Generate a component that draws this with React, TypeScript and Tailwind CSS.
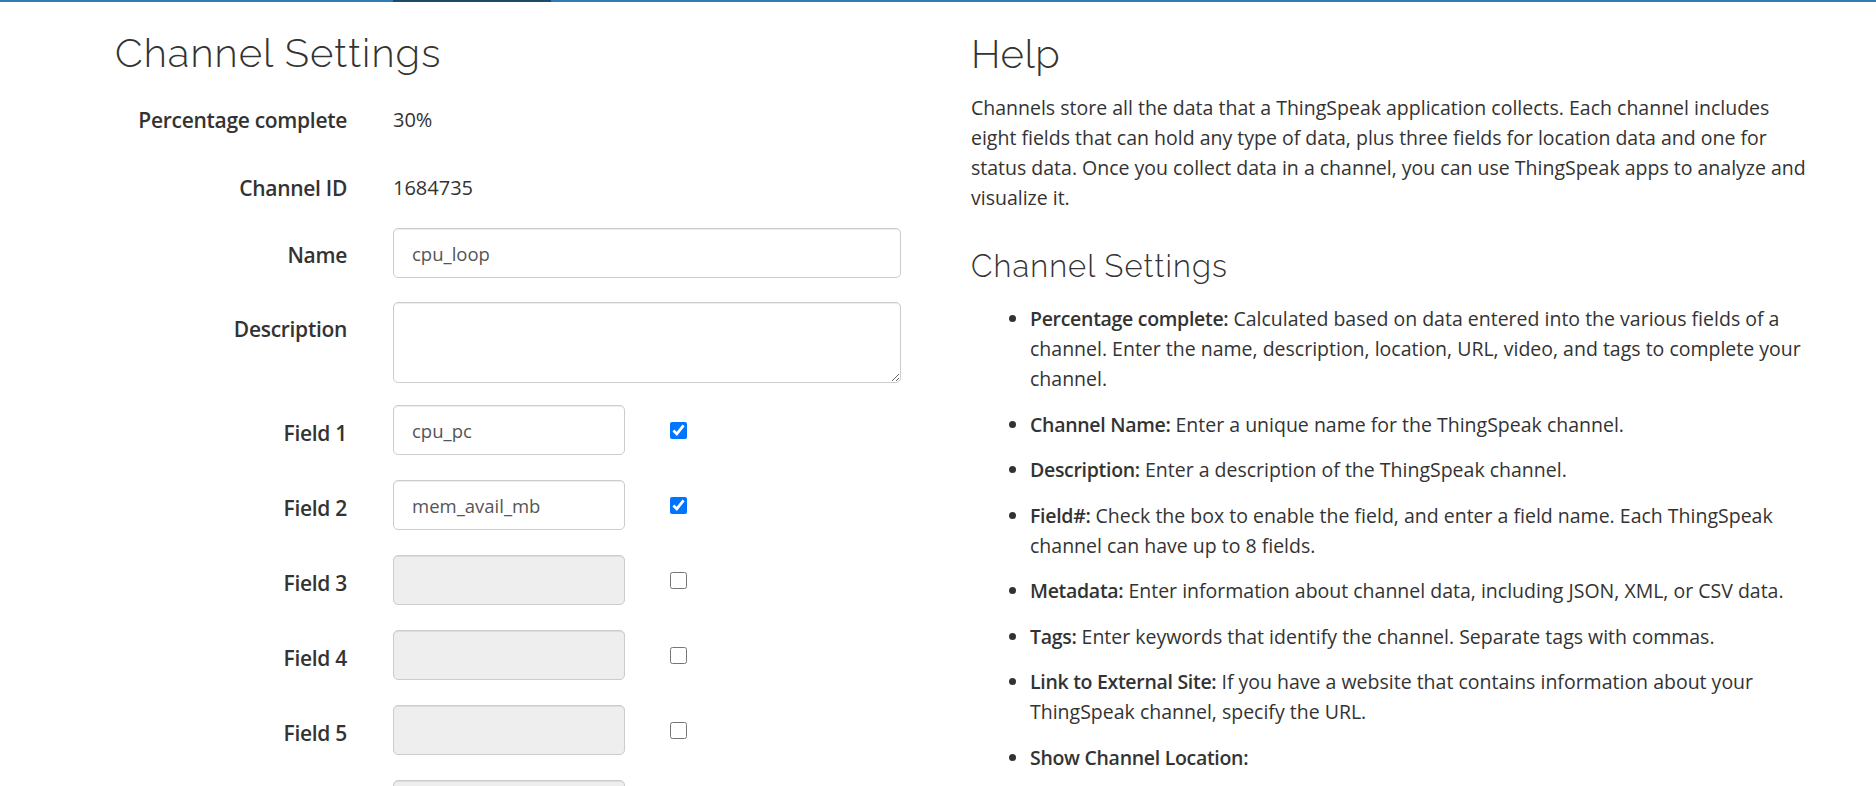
import React from "react";

const fields = [
  { label: "Field 1", value: "cpu_pc", enabled: true },
  { label: "Field 2", value: "mem_avail_mb", enabled: true },
  { label: "Field 3", value: "", enabled: false },
  { label: "Field 4", value: "", enabled: false },
  { label: "Field 5", value: "", enabled: false },
  { label: "Field 6", value: "", enabled: false },
  { label: "Field 7", value: "", enabled: false },
  { label: "Field 8", value: "", enabled: false },
];

const help = [
  {
    b: "Percentage complete:",
    t: " Calculated based on data entered into the various fields of a channel. Enter the name, description, location, URL, video, and tags to complete your channel.",
  },
  { b: "Channel Name:", t: " Enter a unique name for the ThingSpeak channel." },
  { b: "Description:", t: " Enter a description of the ThingSpeak channel." },
  {
    b: "Field#:",
    t: " Check the box to enable the field, and enter a field name. Each ThingSpeak channel can have up to 8 fields.",
  },
  { b: "Metadata:", t: " Enter information about channel data, including JSON, XML, or CSV data." },
  { b: "Tags:", t: " Enter keywords that identify the channel. Separate tags with commas." },
  {
    b: "Link to External Site:",
    t: " If you have a website that contains information about your ThingSpeak channel, specify the URL.",
  },
  { b: "Show Channel Location:", t: "" },
];

const inputCls =
  "h-[50px] rounded-[5px] border border-[#cccccc] px-[18px] text-[18.5px] text-[#555555] shadow-[inset_0_1px_1px_rgba(0,0,0,0.075)] outline-none font-['Open_Sans',sans-serif]";

const labelCls =
  "w-[232px] shrink-0 text-right text-[21px] leading-[30px] font-semibold tracking-[-0.3px]";

export default function App() {
  return (
    <div className="bg-white text-[#333333] font-['Open_Sans',sans-serif]">
      <div className="flex h-[2px]">
        <div className="w-[393px] bg-[#2f7bb5]" />
        <div className="w-[158px] bg-[#1c4b68]" />
        <div className="flex-1 bg-[#2f7bb5]" />
      </div>

      <div className="flex pl-[115px]">
        {/* Left column: form */}
        <div className="w-[856px] shrink-0">
          <h1 className="mt-[27px] h-[48px] text-[40px] leading-[48px] font-light tracking-[1.1px] text-[#333333] font-['Raleway','Lato',sans-serif]">
            Channel Settings
          </h1>

          <div className="mt-[28px] flex h-[30px] items-start">
            <div className={labelCls}>Percentage complete</div>
            <div className="ml-[46px] text-[20px] leading-[30px]">30%</div>
          </div>

          <div className="mt-[38px] flex h-[30px] items-start">
            <div className={labelCls}>Channel ID</div>
            <div className="ml-[46px] text-[20px] leading-[30px]">1684735</div>
          </div>

          <div className="mt-[25px] flex items-start">
            <div className={labelCls + " pt-[12px]"}>Name</div>
            <input
              className={inputCls + " ml-[46px] w-[508px] bg-white"}
              defaultValue="cpu_loop"
            />
          </div>

          <div className="mt-[24px] flex items-start">
            <div className={labelCls + " pt-[12px]"}>Description</div>
            <textarea
              className="ml-[46px] block h-[81px] w-[508px] rounded-[5px] border border-[#cccccc] bg-white px-[18px] py-[10px] text-[18.5px] text-[#555555] shadow-[inset_0_1px_1px_rgba(0,0,0,0.075)] outline-none font-['Open_Sans',sans-serif]"
              defaultValue=""
            />
          </div>

          <div className="mt-[22px] flex flex-col gap-[25px] pb-[40px]">
            {fields.map((f) => (
              <div key={f.label} className="flex items-start">
                <div className={labelCls + " pt-[13px]"}>{f.label}</div>
                <input
                  className={
                    inputCls +
                    " ml-[46px] w-[232px] " +
                    (f.enabled ? "bg-white" : "bg-[#eeeeee]")
                  }
                  defaultValue={f.value}
                  disabled={!f.enabled}
                />
                <div className="ml-[45px] flex h-[50px] items-center">
                  <input
                    type="checkbox"
                    defaultChecked={f.enabled}
                    className="m-0 h-[17px] w-[17px]"
                  />
                </div>
              </div>
            ))}
          </div>
        </div>

        {/* Right column: help */}
        <div className="w-[841px] shrink-0">
          <h2 className="mt-[28px] h-[48px] text-[40px] leading-[48px] font-light tracking-[0.5px] text-[#333333] font-['Raleway','Lato',sans-serif]">
            Help
          </h2>
          <p className="mt-[15px] text-[19.5px] leading-[30px]">
            Channels store all the data that a ThingSpeak application collects. Each channel includes eight
            fields that can hold any type of data, plus three fields for location data and one for status data.
            Once you collect data in a channel, you can use ThingSpeak apps to analyze and visualize it.
          </p>
          <h3 className="mt-[35px] h-[36px] text-[31px] leading-[36px] font-light tracking-[1.1px] text-[#333333] font-['Raleway','Lato',sans-serif]">
            Channel Settings
          </h3>
          <ul className="mt-[20px] list-disc pl-[59px] text-[19.5px] leading-[30px]">
            {help.map((h) => (
              <li key={h.b} className="mb-[15.5px]">
                <b className="font-semibold tracking-[-0.3px]">{h.b}</b>
                {h.t}
              </li>
            ))}
          </ul>
        </div>
      </div>
    </div>
  );
}
